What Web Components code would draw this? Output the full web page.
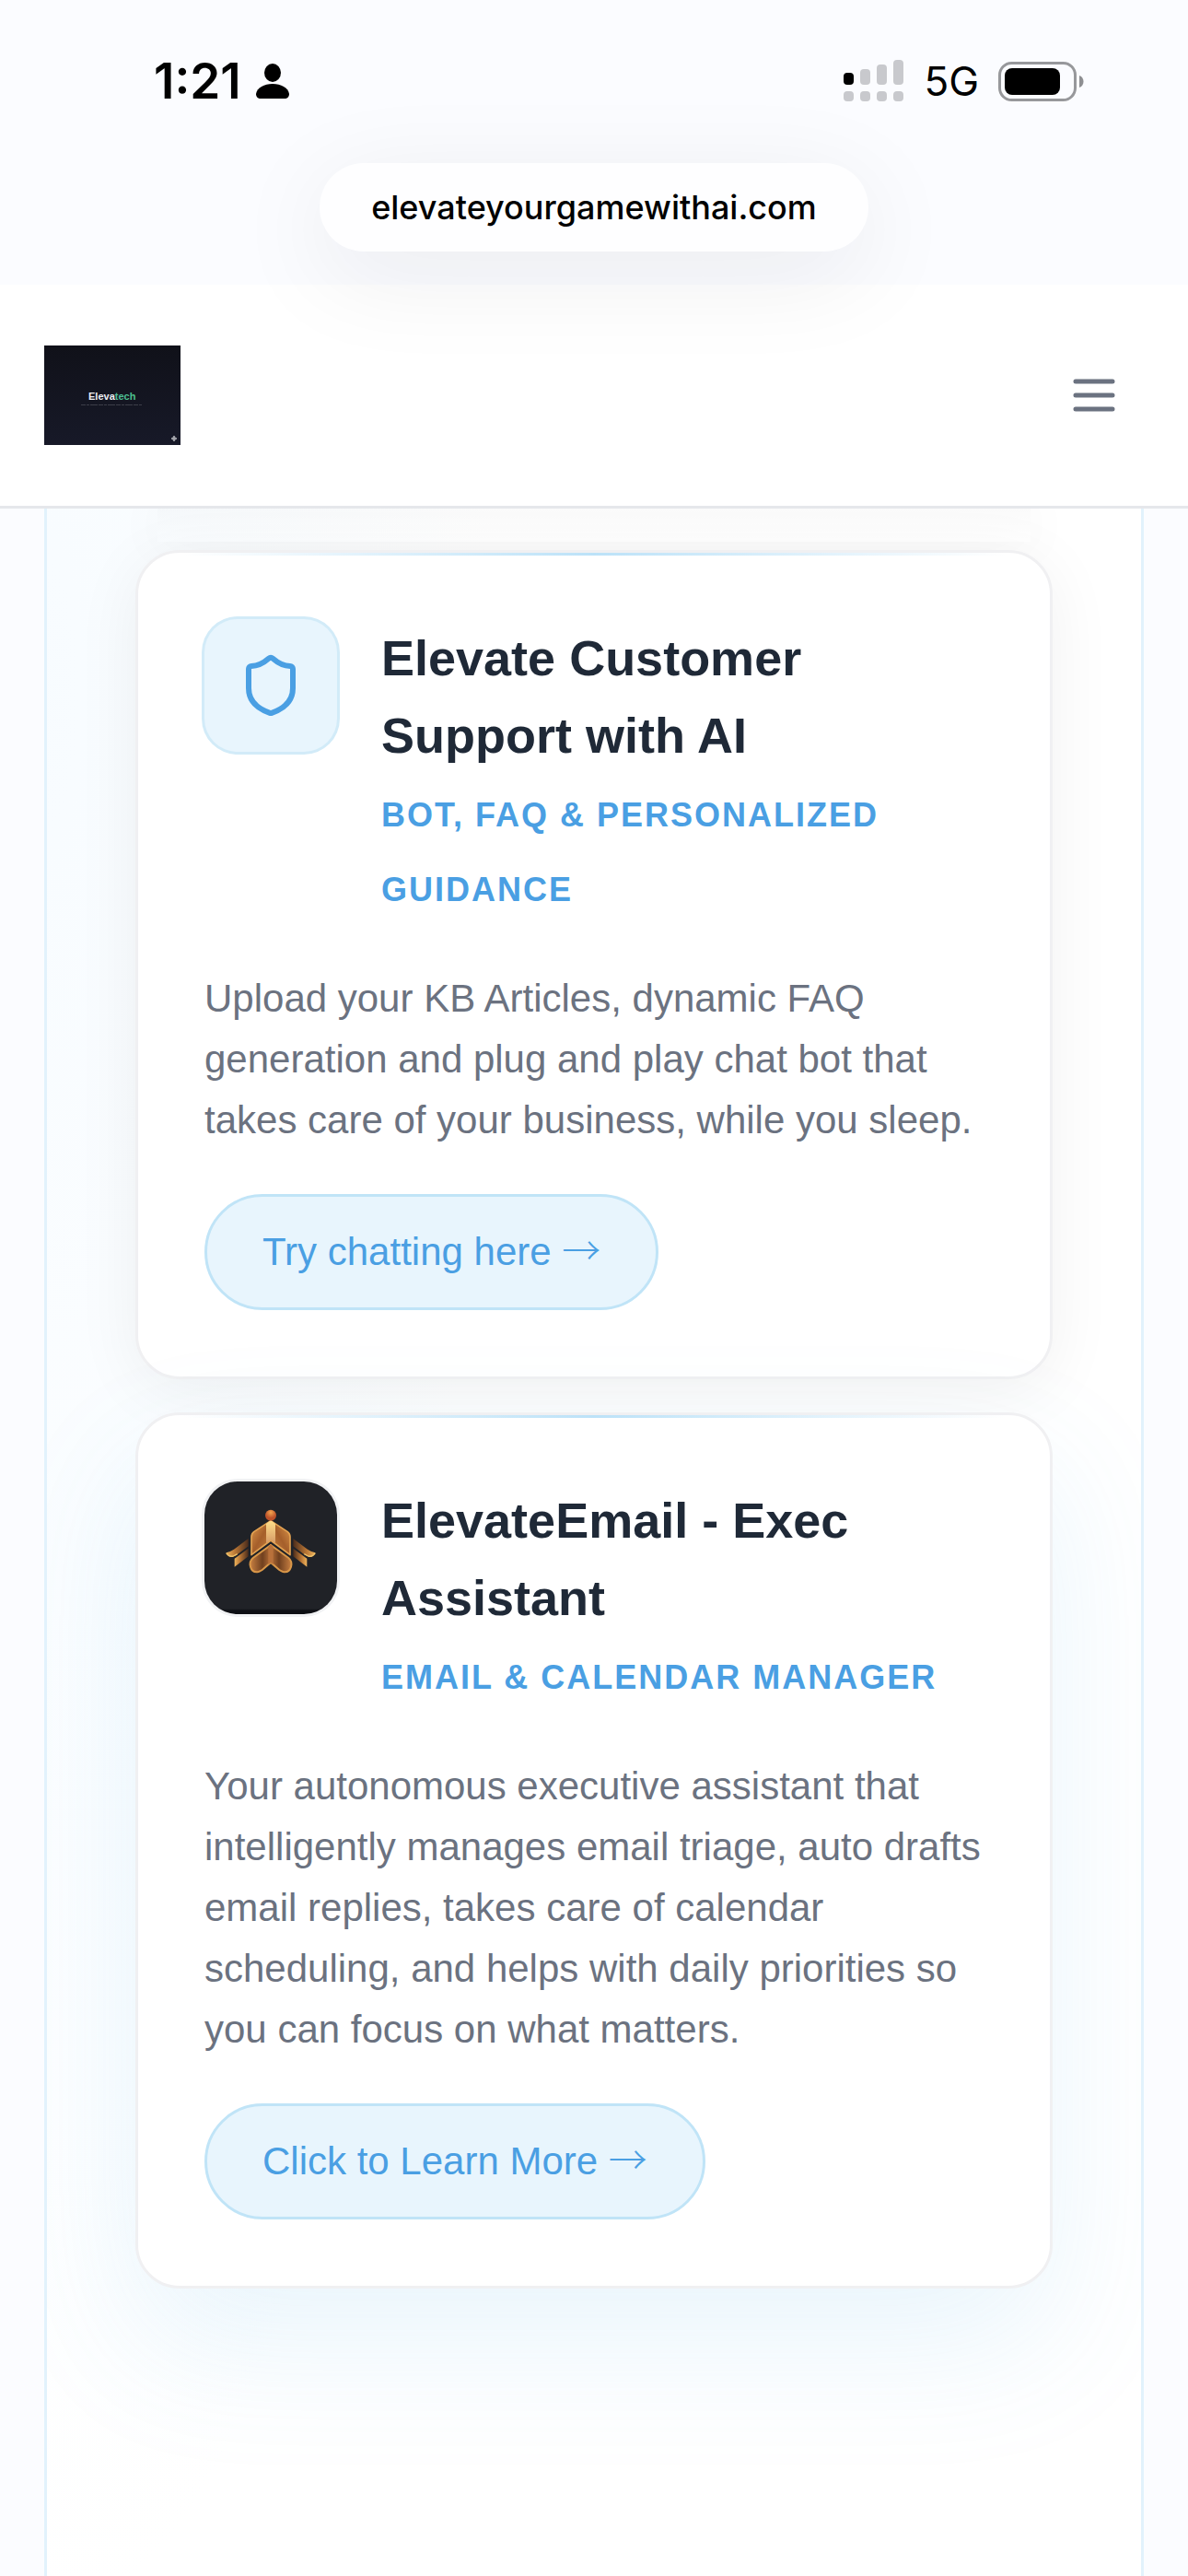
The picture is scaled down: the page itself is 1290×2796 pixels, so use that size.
<!DOCTYPE html>
<html lang="en">
<head>
<meta charset="utf-8">
<meta name="viewport" content="width=device-width, initial-scale=1">
<title>Elevatech</title>
<style>
  :root {
    --page: #fbfcff;
    --accent: #4a9fe3;
    --accent-soft: #e8f5fd;
    --accent-line: #c0e4f7;
    --ink: #1f2937;
    --muted: #6b7280;
    --ui: Inter, "Liberation Sans", sans-serif;
  }
  body {
    margin: 0;
    min-height: 100vh;
    display: flex;
    flex-direction: column;
    background: var(--page);
    font-family: "Liberation Sans", Arial, sans-serif;
    color: var(--ink);
  }
</style>
</head>
<body>
  <phone-bar time="1:21" network="5G" address="elevateyourgamewithai.com"></phone-bar>
  <site-header></site-header>
  <product-panel>
    <product-card heading="Elevate Customer Support with AI" tagline="Bot, FAQ &amp; Personalized Guidance" action="Try chatting here">
      <shield-icon slot="icon"></shield-icon>
      Upload your KB Articles, dynamic FAQ generation and plug and play chat bot that takes care of your business, while you sleep.
    </product-card>
    <product-card variant="glow" heading="ElevateEmail - Exec Assistant" tagline="Email &amp; Calendar Manager" action="Click to Learn More">
      <email-icon slot="icon"></email-icon>
      Your autonomous executive assistant that intelligently manages email triage, auto drafts email replies, takes care of calendar scheduling, and helps with daily priorities so you can focus on what matters.
    </product-card>
  </product-panel>

<script>
const template = (html) => {
  const tpl = document.createElement('template');
  tpl.innerHTML = html;
  return tpl;
};

// shared base: clones the template of the class into an open root
class BaseElement extends HTMLElement {
  constructor() {
    super();
    this.attachShadow({ mode: 'open' }).append(this.constructor.tpl.content.cloneNode(true));
    this.$ = (sel) => this.shadowRoot.querySelector(sel);
  }
}

// ===== Phone status bar and address pill =====
class PhoneBar extends BaseElement {
  static tpl = template(/*html*/`
    <style>
      :host {
        display: flex; flex-direction: column;
        position: relative; z-index: 3;
        font-family: var(--ui); color: #000;
      }
      .status {
        display: flex; align-items: center; justify-content: space-between;
        height: 60px; padding: 58px 113px 59px 167px;
      }
      .left, .right { display: flex; align-items: center; }
      .left { gap: 16px; }
      .right { gap: 21px; }
      svg { display: block; }
      .time { font-size: 53px; line-height: 60px; font-weight: 600; }
      .net { font-size: 44px; line-height: 60px; }
      .url {
        align-self: center;
        margin-bottom: 36px; padding: 0 56px;
        border-radius: 48px;
        background: #fefeff;
        box-shadow: 0 24px 108px rgba(20, 22, 32, .08);
        font-size: 36px; line-height: 96px; font-weight: 500;
      }
    </style>
    <div class="status">
      <div class="left">
        <span class="time"></span>
        <svg width="36" height="40" viewBox="0 0 36 40" aria-hidden="true">
          <ellipse cx="18" cy="11" rx="9" ry="10"/>
          <path d="M5 39C2 39 0 37 0 34C1 27 9 23 18 23S35 27 36 34C36 37 34 39 31 39Z"/>
        </svg>
      </div>
      <div class="right">
        <svg width="66" height="46" viewBox="0 0 66 46" fill="#c8c9cd" aria-hidden="true">
          <rect y="14" width="11" height="13" rx="4" fill="#000"/>
          <rect x="18" y="10" width="11" height="17" rx="4"/>
          <rect x="36" y="5" width="11" height="22" rx="4"/>
          <rect x="54" width="11" height="27" rx="4"/>
          <rect y="34" width="11" height="11" rx="4"/>
          <rect x="18" y="34" width="11" height="11" rx="4"/>
          <rect x="36" y="34" width="11" height="11" rx="4"/>
          <rect x="54" y="34" width="11" height="11" rx="4"/>
        </svg>
        <span class="net"></span>
        <svg width="93" height="43" viewBox="0 0 93 43" aria-hidden="true">
          <rect x="1.5" y="1.5" width="82" height="40" rx="13" fill="none" stroke="#97989b" stroke-width="3"/>
          <rect x="7" y="7" width="60" height="29" rx="8"/>
          <path d="M88 15c6 2 6 11 0 13z" fill="#8e8f92"/>
        </svg>
      </div>
    </div>
    <div class="url"></div>
  `);
  connectedCallback() {
    this.$('.time').textContent = this.getAttribute('time') ?? '';
    this.$('.net').textContent = this.getAttribute('network') ?? '';
    this.$('.url').textContent = this.getAttribute('address') ?? '';
  }
}
customElements.define('phone-bar', PhoneBar);

// ===== Site header =====
class SiteHeader extends BaseElement {
  static tpl = template(/*html*/`
    <style>
      :host {
        display: block;
        position: relative; z-index: 2;
        background: #fff;
        border-bottom: 3px solid #e5e7eb;
      }
      header {
        display: flex; align-items: center; justify-content: space-between;
        padding: 66px 48px;
      }
      a, svg { display: block; }
      button {
        padding: 24px; border: 0;
        background: none; color: var(--muted);
      }
    </style>
    <header>
      <a href="#" aria-label="Elevatech home">
        <svg width="148" height="108" viewBox="0 0 148 108">
          <defs>
            <linearGradient id="bg" x2="0" y2="1">
              <stop offset="0" stop-color="#101119"/>
              <stop offset="1" stop-color="#171928"/>
            </linearGradient>
            <linearGradient id="green">
              <stop offset="0" stop-color="#4fb5b0"/>
              <stop offset="1" stop-color="#4cc38a"/>
            </linearGradient>
          </defs>
          <rect width="148" height="108" fill="url(#bg)"/>
          <text x="48" y="59" font-size="11" font-weight="700" fill="#eceef2">Eleva<tspan fill="url(#green)">tech</tspan></text>
          <path d="M40 64.5h67" stroke="#3c3e48" stroke-dasharray="5 1 3 1 8 1"/>
          <path d="M141 98l1 2 2 1-2 1-1 2-1-2-2-1 2-1z" fill="#a5a6ac" stroke="#a5a6ac"/>
        </svg>
      </a>
      <button type="button" aria-label="Open menu">
        <svg width="60" height="60" viewBox="0 0 24 24" fill="none" stroke="currentColor" stroke-width="2" stroke-linecap="round">
          <path d="M4 6h16M4 12h16M4 18h16"/>
        </svg>
      </button>
    </header>
  `);
}
customElements.define('site-header', SiteHeader);

// ===== Panel that holds the cards =====
class ProductPanel extends BaseElement {
  static tpl = template(/*html*/`
    <style>
      :host {
        display: flex; flex: 1; flex-direction: column; gap: 36px;
        margin: 0 48px; padding: 45px 96px 96px;
        border: solid #e2f2fc; border-width: 0 3px;
        background:
          radial-gradient(ellipse 480px 2100px at 0 200px, rgba(225, 242, 255, .25), transparent),
          #fff;
        overflow: hidden;
      }
      /* soft shade just under the header */
      .shade {
        height: 36px; margin: -45px 24px -27px;
        background: linear-gradient(rgba(0, 0, 0, .02), transparent);
        box-shadow: 0 0 60px rgba(0, 0, 0, .05);
      }
    </style>
    <div class="shade"></div>
    <slot></slot>
  `);
}
customElements.define('product-panel', ProductPanel);

// ===== Product card =====
class ProductCard extends BaseElement {
  static tpl = template(/*html*/`
    <style>
      :host {
        display: block;
        position: relative;
        padding: 72px;
        border: 3px solid #f0f0f2;
        border-radius: 48px;
        background: #fff;
        box-shadow: 0 12px 72px rgba(0, 0, 0, .06);
      }
      :host([variant="glow"]) {
        box-shadow: 0 60px 150px rgba(74, 170, 227, .12);
      }
      /* highlight along the top edge */
      :host::before {
        content: "";
        position: absolute; top: 0; left: 48px; right: 48px;
        height: 3px;
        background: linear-gradient(90deg, transparent, #bce2f8, transparent);
      }
      .head { display: flex; align-items: flex-start; gap: 48px; margin-bottom: 45px; }
      h3 { margin: 0 0 4px; font-size: 54px; line-height: 84px; }
      .tagline {
        margin: 0;
        color: var(--accent);
        font-size: 36px; line-height: 81px; font-weight: 700;
        letter-spacing: 2px; text-transform: uppercase;
      }
      .body {
        margin: 0 0 47px;
        color: var(--muted);
        font-size: 42px; line-height: 66px;
      }
      a {
        display: inline-block; vertical-align: top;
        padding: 0 60px;
        border: 3px solid var(--accent-line); border-radius: 63px;
        background: var(--accent-soft); color: var(--accent);
        font-size: 42px; line-height: 120px;
        text-decoration: none;
      }
      .arrow { font-family: "Noto Sans CJK JP", sans-serif; font-weight: 300; line-height: 1; }
    </style>
    <div class="head">
      <slot name="icon"></slot>
      <div>
        <h3></h3>
        <p class="tagline"></p>
      </div>
    </div>
    <p class="body"><slot></slot></p>
    <a href="#"><span class="label"></span> <span class="arrow">→</span></a>
  `);
  connectedCallback() {
    this.$('h3').textContent = this.getAttribute('heading') ?? '';
    this.$('.tagline').textContent = this.getAttribute('tagline') ?? '';
    this.$('.label').textContent = this.getAttribute('action') ?? '';
  }
}
customElements.define('product-card', ProductCard);

// ===== Card icons =====
class ShieldIcon extends BaseElement {
  static tpl = template(/*html*/`
    <style>
      :host {
        display: grid; place-items: center; flex: none;
        width: 144px; height: 144px;
        border-radius: 36px;
        background: var(--accent-soft); color: var(--accent);
        box-shadow: 0 0 0 3px #d2ebf8;
      }
    </style>
    <svg width="72" height="72" viewBox="0 0 24 24" fill="none" stroke="currentColor" stroke-width="2" stroke-linecap="round" stroke-linejoin="round" aria-hidden="true">
      <path d="M20 13c0 5-3.5 7.5-7.66 8.95a1 1 0 0 1-.67-.01C7.5 20.5 4 18 4 13V6a1 1 0 0 1 1-1c2 0 4.5-1.2 6.24-2.72a1.17 1.17 0 0 1 1.52 0C14.51 3.81 17 5 19 5a1 1 0 0 1 1 1z"/>
    </svg>
  `);
}
customElements.define('shield-icon', ShieldIcon);

class EmailIcon extends BaseElement {
  static tpl = template(/*html*/`
    <style>
      :host {
        display: block; flex: none; overflow: hidden;
        width: 144px; height: 144px;
        border-radius: 36px;
        background: linear-gradient(#202227 138px, #0e0f14 140px);
        box-shadow: 0 0 0 3px #f1f2f4;
      }
      svg { display: block; }
    </style>
    <svg width="144" height="144" viewBox="0 0 432 432" aria-hidden="true">
      <defs>
        <linearGradient id="half" x2="1" y2="1">
          <stop offset="0" stop-color="#e09a4c"/>
          <stop offset=".5" stop-color="#a55f2b"/>
          <stop offset="1" stop-color="#c98540"/>
        </linearGradient>
        <linearGradient id="mid" x2="0" y2="1">
          <stop offset="0" stop-color="#ffe08a"/>
          <stop offset="1" stop-color="#d69a66"/>
        </linearGradient>
        <linearGradient id="wing">
          <stop offset="0" stop-color="#eeb45c"/>
          <stop offset=".4" stop-color="#b97635"/>
          <stop offset="1" stop-color="#4a2c1c"/>
        </linearGradient>
        <linearGradient id="lobe" x2="1">
          <stop offset="0" stop-color="#c98042"/>
          <stop offset=".6" stop-color="#70401f"/>
          <stop offset="1" stop-color="#b87038"/>
        </linearGradient>
        <radialGradient id="ball" cy=".25">
          <stop offset="0" stop-color="#f4a54e"/>
          <stop offset="1" stop-color="#bd522a"/>
        </radialGradient>
        <g id="side">
          <path d="M143 186L96 221Q84 229 71 232Q76 246 89 246Q98 245 108 237L143 211Z" fill="url(#wing)"/>
          <path d="M71 233Q80 247 94 243L107 236" fill="none" stroke="#edc069" stroke-width="4"/>
          <path d="M143 218L98 251V278L143 244Z" fill="url(#wing)"/>
          <path d="M216 128L162 163Q153 169 153 180V239L216 192Z" fill="url(#half)" stroke="#e3a352" stroke-width="5" stroke-linejoin="round"/>
          <path d="M216 207L158 249Q145 260 150 278Q156 298 176 294Q182 292 188 288L216 264Z" fill="url(#lobe)" stroke="#d99748" stroke-width="6" stroke-linejoin="round"/>
        </g>
      </defs>
      <use href="#side"/>
      <use href="#side" transform="matrix(-1 0 0 1 432 0)"/>
      <path d="M216 126L231 138V202L216 190L201 202V138Z" fill="url(#mid)"/>
      <path d="M216 205L224 213V271L216 264L208 271V213Z" fill="#b9713b"/>
      <circle cx="216" cy="110" r="18" fill="url(#ball)"/>
    </svg>
  `);
}
customElements.define('email-icon', EmailIcon);
</script>
</body>
</html>
